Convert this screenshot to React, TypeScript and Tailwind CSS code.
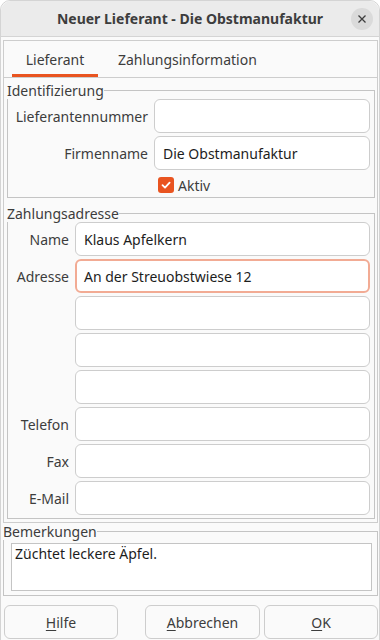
import React from "react";

const font = { fontFamily: '"Noto Sans", "Open Sans", sans-serif' };

function Entry({ value, focus, className = "" }: { value?: string; focus?: boolean; className?: string }) {
  return (
    <div
      className={
        "h-[34px] rounded-[6px] bg-white flex items-center text-[14px] text-[#1d1d1d] " +
        (focus ? "border-2 border-[#f2ab94] px-[7px] " : "border border-[#cdcdcd] px-[8px] ") +
        className
      }
    >
      {value}
    </div>
  );
}

function Btn({ mn, rest, className = "" }: { mn: string; rest: string; className?: string }) {
  return (
    <div
      className={
        "h-[34px] rounded-[6px] border border-[#cdcdcd] bg-[#fafafa] flex items-center justify-center text-[14px] text-[#3d3d3d] " +
        className
      }
    >
      <span>
        <span className="underline decoration-1 underline-offset-[2px]">{mn}</span>
        {rest}
      </span>
    </div>
  );
}

export default function App() {
  const addrRows: { label: string; value?: string; focus?: boolean }[] = [
    { label: "Name", value: "Klaus Apfelkern" },
    { label: "Adresse", value: "An der Streuobstwiese 12", focus: true },
    { label: "" },
    { label: "" },
    { label: "" },
    { label: "Telefon" },
    { label: "Fax" },
    { label: "E-Mail" },
  ];
  return (
    <div className="w-[380px] h-[640px] bg-white overflow-hidden" style={font}>
      <div className="w-[380px] h-[660px] rounded-t-[10px] border border-[#d4d4d4] bg-[#fafafa] flex flex-col">
        {/* title bar */}
        <div className="h-[36px] shrink-0 rounded-t-[10px] bg-[#ebebeb] border-b border-[#d4d4d4] flex items-center justify-center relative">
          <span className="text-[14px] font-bold text-[#3d3d3d]">Neuer Lieferant - Die Obstmanufaktur</span>
          <div className="absolute right-[6px] top-[7px] w-[22px] h-[22px] rounded-full bg-[#dadada] flex items-center justify-center">
            <svg width="10" height="10" viewBox="0 0 10 10">
              <path d="M1.5 1.5 L8.5 8.5 M8.5 1.5 L1.5 8.5" stroke="#3d3d3d" strokeWidth="1.3" />
            </svg>
          </div>
        </div>

        {/* notebook */}
        <div className="ml-[2px] mt-[3px] w-[375px] border border-[#cdcdcd] flex flex-col">
          <div className="h-[37px] border-b border-[#cdcdcd] flex items-stretch bg-[#fafafa]">
            <div className="ml-[8px] w-[86px] flex items-center justify-center border-b-[3px] border-[#e95420] pt-[3px] text-[14px] text-[#3d3d3d]">
              Lieferant
            </div>
            <div className="ml-[8px] px-[12px] flex items-center justify-center text-[14px] text-[#3d3d3d]">
              Zahlungsinformation
            </div>
          </div>

          <div className="flex flex-col pl-[3px] pr-[2px] pb-[3px]">
            {/* Identifizierung */}
            <fieldset className="border border-[#c4c4c4] px-0 pb-[4px] pt-0 mt-[4px] min-w-0">
              <legend className="px-0 ml-[-1px] text-[14px] leading-[17px] text-[#3d3d3d]">Identifizierung</legend>
              <div className="flex flex-col gap-[3px] pr-[4px]">
                <div className="flex items-center gap-[6px]">
                  <span className="w-[140px] text-right text-[14px] text-[#3d3d3d]">Lieferantennummer</span>
                  <Entry className="flex-1" />
                </div>
                <div className="flex items-center gap-[6px]">
                  <span className="w-[140px] text-right text-[14px] text-[#3d3d3d]">Firmenname</span>
                  <Entry className="flex-1" value="Die Obstmanufaktur" />
                </div>
                <div className="flex items-center h-[16px] mt-[4px] pl-[150px] gap-[4px]">
                  <div className="w-[16px] h-[16px] rounded-[3px] bg-[#e95420] flex items-center justify-center">
                    <svg width="12" height="12" viewBox="0 0 12 12">
                      <path d="M2.5 6.2 L5 8.6 L9.6 3.6" stroke="white" strokeWidth="1.8" fill="none" strokeLinecap="round" strokeLinejoin="round" />
                    </svg>
                  </div>
                  <span className="text-[14px] text-[#3d3d3d]">Aktiv</span>
                </div>
              </div>
            </fieldset>

            {/* Zahlungsadresse */}
            <fieldset className="border border-[#c4c4c4] px-0 pb-[3px] pt-0 mt-[7px] min-w-0">
              <legend className="px-0 ml-[-1px] text-[14px] leading-[17px] text-[#3d3d3d]">Zahlungsadresse</legend>
              <div className="flex flex-col gap-[3px] pr-[4px]">
                {addrRows.map((r, i) => (
                  <div key={i} className="flex items-center gap-[6px]">
                    <span className="w-[61px] text-right text-[14px] text-[#3d3d3d]">{r.label}</span>
                    <Entry className="flex-1" value={r.value} focus={r.focus} />
                  </div>
                ))}
              </div>
            </fieldset>
          </div>
        </div>

        {/* Bemerkungen */}
        <fieldset className="ml-[2px] w-[375px] border border-[#c4c4c4] pl-[7px] pr-[5px] pb-[4px] pt-0 min-w-0">
          <legend className="px-0 ml-[-8px] text-[14px] leading-[17px] text-[#3d3d3d]">Bemerkungen</legend>
          <div className="mt-[3px] h-[48px] border border-[#c4c4c4] bg-white px-[3px] pt-[1px] text-[14px] leading-[17px] text-[#1d1d1d]">
            Züchtet leckere Äpfel.
          </div>
        </fieldset>

        {/* buttons */}
        <div className="flex mt-[9px] ml-[3px] w-[374px]">
          <Btn mn="H" rest="ilfe" className="w-[114px]" />
          <Btn mn="A" rest="bbrechen" className="w-[115px] ml-[27px]" />
          <Btn mn="O" rest="K" className="w-[114px] ml-[4px]" />
        </div>
      </div>
    </div>
  );
}
